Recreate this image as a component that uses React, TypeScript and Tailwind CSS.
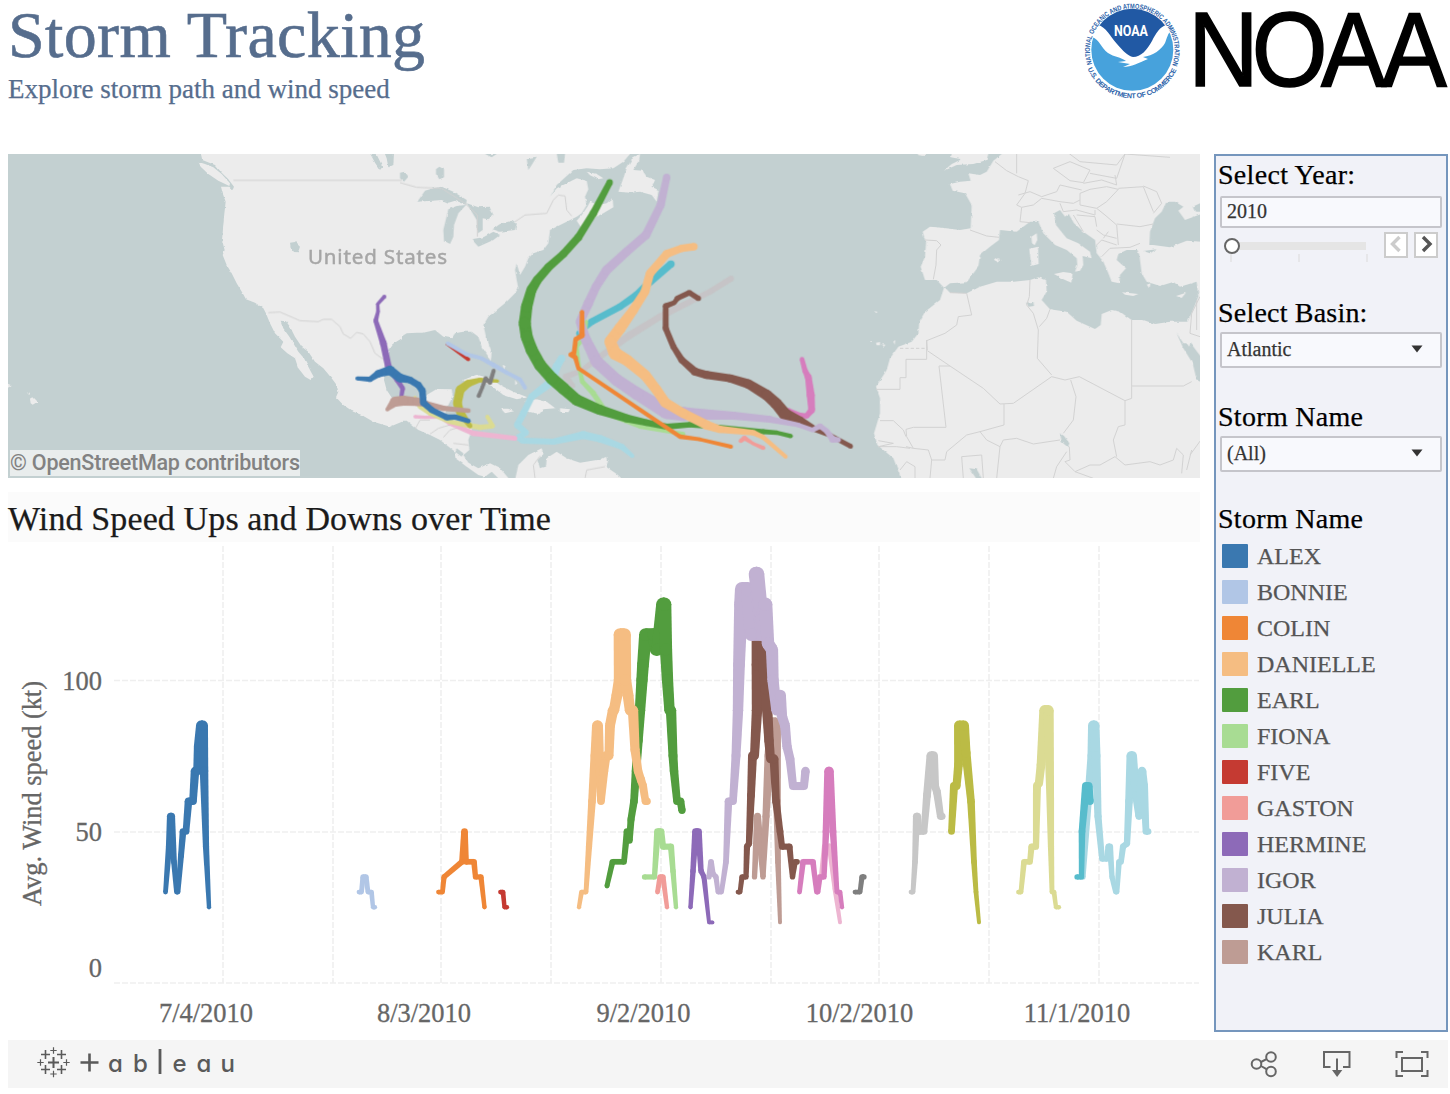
import React from "react";

type Pt = [number, number, number];

function Taper({ pts, color }: { pts: Pt[]; color: string }) {
  return (
    <g fill={color}>
      {pts.map(([x, y, w], i) => {
        const next = pts[i + 1];
        let poly = null;
        if (next) {
          const [x2, y2, w2] = next;
          const len = Math.hypot(x2 - x, y2 - y) || 1;
          const nx = -(y2 - y) / len / 2;
          const ny = (x2 - x) / len / 2;
          poly = (
            <polygon
              points={`${x + nx * w},${y + ny * w} ${x2 + nx * w2},${y2 + ny * w2} ${x2 - nx * w2},${y2 - ny * w2} ${x - nx * w},${y - ny * w}`}
            />
          );
        }
        return (
          <React.Fragment key={i}>
            {poly}
            <circle cx={x} cy={y} r={w / 2} />
          </React.Fragment>
        );
      })}
    </g>
  );
}

const C = {
  alex: "#3a78b0",
  bonnie: "#b1c6e6",
  colin: "#ef8636",
  danielle: "#f5bd82",
  earl: "#529d3e",
  fiona: "#a8dc93",
  five: "#c53a32",
  gaston: "#f19c98",
  hermine: "#8d6ab8",
  igor: "#c1b1d2",
  julia: "#84584d",
  karl: "#be9c94",
  lisa: "#d67dbd",
  matthew: "#edb5d1",
  nicole: "#7f7f7f",
  otto: "#c7c7c7",
  paula: "#bbbb45",
  richard: "#dbdb93",
  shary: "#57bccc",
  tomas: "#a9d8e3",
};

/* Storm paths: x, y, stroke width */
const tracks: [string, Pt[]][] = [
  [C.tomas, [[485, 625, 22], [470, 650, 24], [455, 695, 26], [395, 740, 20], [370, 790, 20], [352, 825, 20], [378, 848, 18], [355, 862, 18], [368, 872, 18], [460, 875, 18], [550, 855, 24], [600, 866, 22], [665, 890, 18], [697, 918, 12]]],
  [C.matthew, [[45, 800, 10], [75, 802, 10], [120, 800, 12], [150, 820, 14], [220, 850, 16], [345, 865, 14]]],
  [C.richard, [[45, 742, 10], [60, 770, 14], [90, 790, 14], [150, 815, 14], [200, 825, 16], [240, 832, 16], [278, 828, 14], [262, 800, 12]]],
  [C.paula, [[292, 693, 10], [240, 690, 14], [205, 700, 22], [180, 720, 27], [172, 760, 26], [180, 785, 24], [210, 828, 14]]],
  [C.hermine, [[-47, 440, 12], [-67, 462, 10], [-66, 485, 11], [-73, 512, 14], [-50, 580, 20], [-35, 650, 20], [-8, 690, 16], [8, 715, 14], [4, 740, 12]]],
  [C.karl, [[-38, 778, 12], [-15, 755, 30], [10, 752, 30], [50, 755, 26], [80, 762, 18], [130, 775, 16], [205, 782, 14]]],
  [C.alex, [[-128, 685, 12], [-90, 688, 16], [-65, 671, 22], [-30, 661, 28], [0, 684, 26], [30, 690, 20], [55, 705, 20], [67, 722, 20], [70, 758, 20], [95, 780, 18], [140, 802, 18], [165, 801, 16], [205, 813, 14]]],
  [C.shary, [[813, 342, 22], [740, 405, 22], [710, 435, 22], [660, 470, 20], [575, 515, 20], [535, 550, 14], [580, 602, 12]]],
  [C.fiona, [[558, 515, 12], [555, 560, 12], [530, 590, 12], [537, 650, 12], [547, 695, 14], [580, 730, 16], [620, 790, 16], [720, 830, 12], [850, 852, 12]]],
  [C.earl, [[629, 97, 19], [580, 190, 22], [535, 262, 23], [490, 312, 23], [445, 352, 25], [412, 390, 27], [394, 420, 30], [380, 470, 34], [374, 520, 36], [380, 560, 36], [395, 600, 36], [420, 645, 36], [455, 685, 36], [490, 715, 36], [530, 750, 34], [600, 780, 30], [680, 805, 24], [740, 818, 20], [800, 830, 18], [870, 824, 16], [940, 830, 15], [1090, 845, 15], [1130, 848, 13], [1172, 858, 13]]],
  [C.lisa, [[1206, 628, 14], [1215, 662, 16], [1225, 682, 20], [1232, 735, 24], [1235, 780, 20], [1220, 798, 16], [1200, 795, 14], [1165, 782, 16]]],
  [C.julia, [[895, 445, 16], [868, 428, 16], [832, 445, 16], [823, 458, 14], [797, 468, 17], [797, 535, 18], [820, 590, 18], [845, 630, 20], [885, 665, 24], [920, 675, 24], [990, 685, 24], [1045, 702, 28], [1100, 735, 32], [1128, 760, 34], [1155, 793, 36], [1200, 810, 22], [1240, 835, 18], [1290, 856, 14], [1352, 889, 14]]],
  [C.igor, [[800, 82, 22], [782, 165, 24], [738, 255, 26], [680, 305, 26], [620, 360, 28], [588, 410, 26], [565, 460, 28], [540, 515, 26], [558, 570, 30], [590, 635, 36], [650, 690, 36], [710, 730, 38], [800, 785, 44], [850, 792, 42], [890, 792, 34], [1000, 797, 24], [1110, 808, 20], [1195, 825, 14], [1238, 840, 14], [1260, 828, 16], [1280, 843, 16], [1298, 868, 20], [1315, 870, 15]]],
  [C.danielle, [[882, 290, 22], [845, 295, 22], [800, 312, 24], [750, 370, 25], [735, 425, 26], [700, 480, 28], [660, 535, 34], [630, 575, 34], [645, 610, 38], [680, 630, 34], [735, 675, 32], [770, 720, 30], [795, 757, 30], [850, 790, 28], [920, 825, 28], [960, 838, 22], [1060, 848, 16], [1090, 862, 14], [1157, 920, 12]]],
  [C.colin, [[546, 486, 13], [546, 556, 16], [527, 568, 14], [522, 610, 14], [512, 614, 14], [526, 622, 14], [535, 655, 12], [840, 860, 13], [900, 868, 11], [993, 890, 12]]],
  [C.gaston, [[1022, 873, 12], [1033, 864, 14], [1058, 880, 10], [1090, 894, 12]]],
  [C.five, [[140, 583, 6], [205, 628, 11]]],
  [C.bonnie, [[143, 580, 12], [200, 613, 12], [245, 625, 12], [280, 645, 14], [320, 668, 12], [360, 688, 12], [375, 713, 12]]],
  [C.nicole, [[281, 662, 12], [270, 698, 13], [257, 685, 13], [247, 712, 11], [236, 738, 12]]],
];

const ottoTrack: Pt[] = [[993, 386, 18], [930, 425, 17], [780, 500, 20], [690, 555, 22], [600, 620, 18], [545, 662, 16], [497, 680, 18], [520, 708, 12]];

/* Wind speed series: x, knots */
const series: [string, [number, number][]][] = [
  [C.alex, [[165.5, 30], [169, 45], [170.5, 55], [171.5, 55], [174, 40], [176.5, 30], [178, 30], [181, 42], [183, 50], [186, 50], [188.5, 60], [193, 60], [195, 70], [197.5, 70], [198.5, 78], [201, 85], [203, 85], [204, 70], [206, 45], [209, 25]]],
  [C.bonnie, [[359, 30], [361.5, 30], [363, 35], [366, 35], [368, 30], [371.5, 30], [373, 25], [375, 25]]],
  [C.colin, [[438.5, 30], [442.5, 30], [444, 35], [462, 40], [464.5, 50], [466, 40], [474, 40], [475.5, 35], [481, 35], [484.5, 25]]],
  [C.five, [[500.5, 30], [503, 30], [504.5, 25], [507, 25]]],
  [C.earl, [[607, 32], [612.5, 40], [624, 40], [627, 50], [629.5, 47], [631, 54], [634, 60], [636, 70], [638, 80], [640, 90], [642, 100], [643, 105], [645.5, 115], [654, 115], [656, 110], [657.5, 110], [663, 125], [664.5, 125], [666, 110], [667.5, 100], [669.5, 90], [671, 90], [673, 75], [674, 70], [677, 60], [680.5, 60], [682, 57]]],
  [C.danielle, [[579, 25], [581.5, 30], [586, 30], [589, 45], [592, 60], [595, 75], [597, 85], [598, 85], [600, 70], [601, 60], [604, 70], [606, 75], [609, 75], [610, 85], [613, 90], [614, 90], [617, 95], [619.5, 100], [620, 115], [624.5, 115], [625.5, 100], [628, 95], [630, 90], [633, 90], [635, 77], [638, 70], [641, 67], [643, 65], [645.5, 60], [647, 60]]],
  [C.fiona, [[644.5, 35], [654.5, 35], [657.5, 50], [661, 50], [663, 45], [671, 45], [673, 37], [676, 25]]],
  [C.gaston, [[657.5, 30], [660, 35], [663, 35], [667, 25]]],
  [C.hermine, [[690.5, 25], [693, 37], [695.5, 50], [698.5, 50], [701, 37], [704, 35], [709, 20], [712.5, 20]]],
  [C.karl, [[754.5, 35], [757.5, 55], [759, 50], [763, 35], [766, 55], [769, 75], [772, 86], [776, 86], [777, 60], [778, 40], [780, 20]]],
  [C.julia, [[738, 30], [740, 30], [742, 35], [746, 35], [747, 45], [749, 46], [751, 62], [752.5, 75], [754.5, 75], [757, 90], [757.5, 105], [758, 115], [762, 115], [766, 97], [769, 80], [770.5, 74], [774, 74], [776, 60], [780, 50], [782, 45], [789.5, 45], [792.5, 35], [795, 40], [797, 40]]],
  [C.igor, [[709, 35], [711, 40], [713, 36], [716, 35], [718, 30], [721.5, 30], [726, 40], [728.5, 60], [733, 60], [736, 75], [738, 90], [739, 105], [741, 125], [742, 130], [748, 130], [751, 115], [762, 115], [756, 135], [757, 135], [762, 120], [765.5, 125], [768, 112], [772, 110], [773, 100], [776.5, 90], [780.5, 95], [782, 88], [785, 85], [787, 78], [790, 74], [793, 65], [804, 65], [805.5, 70]]],
  [C.matthew, [[819, 35], [821.5, 35], [825, 45], [830, 45], [835, 31], [840, 20]]],
  [C.lisa, [[799.5, 30], [803, 40], [813, 40], [816.5, 30], [818, 30], [820, 35], [824, 35], [826, 50], [828.5, 70], [829.5, 70], [833, 50], [837, 30], [840, 30], [842, 25]]],
  [C.nicole, [[855, 30], [860, 30], [862, 35], [864, 35]]],
  [C.otto, [[911, 30], [913, 30], [915, 40], [916.5, 55], [917.5, 55], [919, 50], [924, 50], [927, 62], [931, 75], [933.5, 75], [935, 65], [937, 63], [940.5, 55], [942, 55]]],
  [C.paula, [[951.5, 50], [954, 65], [956.5, 65], [958.5, 72], [959, 85], [964, 85], [966, 76], [971, 60], [974, 40], [976, 30], [979, 20]]],
  [C.richard, [[1018.5, 30], [1021, 30], [1024, 40], [1030, 40], [1031.5, 45], [1036, 45], [1037, 65], [1039, 66], [1041, 72], [1044.5, 90], [1048.5, 90], [1050, 65], [1051, 45], [1052, 30], [1054, 30], [1056, 25], [1059, 25]]],
  [C.tomas, [[1083, 35], [1088, 60], [1092, 75], [1093, 85], [1094.5, 85], [1096, 75], [1098, 55], [1102, 41], [1107, 41], [1108.5, 45], [1110, 45], [1112, 35], [1115.5, 30], [1117, 30], [1119, 40], [1121, 40], [1123, 45], [1127, 46], [1129, 60], [1131, 75], [1132.5, 75], [1136, 62], [1139, 55], [1142, 70], [1144, 65], [1146, 50], [1148, 50]]],
  [C.shary, [[1077, 35], [1081.5, 35], [1082, 50], [1086, 65], [1088.5, 65], [1090, 60]]],
];

const toY = (kt: number) => 983 - kt * 3.03;
const toW = (kt: number) => 2 + kt * 0.093;

const legend: [string, string][] = [
  ["ALEX", C.alex],
  ["BONNIE", C.bonnie],
  ["COLIN", C.colin],
  ["DANIELLE", C.danielle],
  ["EARL", C.earl],
  ["FIONA", C.fiona],
  ["FIVE", C.five],
  ["GASTON", C.gaston],
  ["HERMINE", C.hermine],
  ["IGOR", C.igor],
  ["JULIA", C.julia],
  ["KARL", C.karl],
];

function StormMap() {
  return (
    <svg viewBox="8 154 1192 324" width="1192" height="324" className="block">
      <defs>
        {/* Rough coastline edges */}
        <filter id="coast" x="0" y="0" width="100%" height="100%">
          <feTurbulence type="fractalNoise" baseFrequency="0.2" numOctaves="2" seed="4" result="n" />
          <feDisplacementMap in="SourceGraphic" in2="n" scale="2.5" xChannelSelector="R" yChannelSelector="G" />
        </filter>
      </defs>
      <rect x="8" y="154" width="1192" height="324" fill="#c3d0d1" />
      <g filter="url(#coast)">
        {/* Western North America and Mexico */}
        <g transform="translate(0 150) scale(.33333)">
          <g fill="#ececec">
            <path d="M600 0L607 30L645 45L665 68L685 88L702 110L698 120L688 110L663 110L668 130L677 155L672 200L668 250L666 270L674 300L668 315L680 345L695 370L710 400L728 430L738 448L765 458L790 475L797 488L810 520L825 550L850 575L842 592L862 610L885 625L895 655L915 680L932 690L941 680L930 660L912 625L895 605L880 580L868 560L850 535L842 512L858 514L870 530L885 560L905 590L925 605L945 635L970 655L995 685L1010 705L1015 725L1008 742L1030 765L1060 785L1085 795L1120 815L1170 830L1206 815L1206 748L1180 750L1160 720L1152 690L1155 665L1166 630L1165 600L1178 582L1206 565L1206 0Z" />
            <path d="M596 36L615 42L640 52L665 72L690 100L688 108L655 92L625 72L602 50Z" />
            <path d="M90 748L100 742L113 755L98 764L92 760Z" />
            <path d="M80 728L90 728L88 735Z M20 700L32 705L24 710Z" />
          </g>
          <g fill="#c3d0d1">
            <path d="M870 278L885 276L900 290L894 307L882 306L872 292Z" />
            <path d="M1105 0L1130 14L1148 50L1140 60L1125 38Z M1150 0L1182 10L1180 45L1165 52L1160 25Z" />
          </g>
        </g>
        {/* Eastern North America, Caribbean and South America */}
        <g transform="translate(400 150) scale(.33333)">
          <g fill="#ececec">
            <path d="M-4 565L20 550L50 548L70 548L105 540L130 560L155 565L165 550L190 545L215 545L235 560L245 590L262 615L272 635L275 605L258 560L250 525L265 500L290 480L320 455L345 430L355 415L350 390L345 360L350 340L360 375L375 350L385 325L400 310L430 300L445 280L450 240L470 230L500 215L530 200L545 190L560 165L555 140L565 118L560 92L530 85L500 100L470 115L450 140L470 105L500 78L520 60L560 55L600 58L640 55L670 35L700 0L-4 0Z" />
            <path d="M530 212L545 235L562 228L580 205L610 190L640 172L638 145L620 160L595 165L570 155L562 170L545 195Z" />
            <path d="M720 12L700 22L680 55L668 90L655 125L690 128L720 125L755 135L770 155L775 120L755 110L765 90L740 80L728 62L700 60L718 30Z" />
            <path d="M560 65L590 72L610 85L595 88L570 76Z" />
            <path d="M-4 748L25 760L65 765L80 735L110 717L155 718L158 740L145 765L135 790L125 805L170 800L210 815L215 840L205 870L208 900L190 915L205 938L235 955L270 940L300 955L325 984L300 990L275 965L255 980L235 975L200 950L170 928L165 905L120 870L90 855L55 840L20 812L-4 812Z" />
            <path d="M345 990L355 945L385 915L425 895L430 912L412 930L420 955L438 950L440 925L470 905L500 925L540 938L590 930L625 930L618 950L650 972L670 990Z" />
            <path d="M190 690L230 674L270 685L300 705L340 725L382 742L350 748L310 735L280 712L240 692L200 700Z" />
            <path d="M370 782L380 765L378 752L410 748L440 755L466 775L430 778L418 792Z M303 776L325 776L342 784L315 790Z M480 775L510 778L505 787L480 785Z" />
            <path d="M308 645L316 648L312 660Z M345 690L352 700L346 706Z M600 930L618 920L622 935Z" />
          </g>
          <g fill="#c3d0d1">
            <path d="M52 155L75 122L100 115L125 110L160 125L200 150L198 165L165 152L145 158L125 150L95 152Z" />
            <path d="M108 58L118 50L132 58L132 82L118 88L108 72Z M0 68L15 65L25 80L12 95L0 85Z" />
            <path d="M145 178L170 168L198 165L175 190L162 225L160 260L150 282L132 272L130 240Z" />
            <path d="M200 160L235 172L268 170L280 195L265 208L248 205L248 240L234 250L230 210L215 185Z" />
            <path d="M215 268L250 262L280 245L300 255L280 270L235 290Z M278 238L300 222L335 212L350 222L345 240L300 245Z" />
            <path d="M380 25L410 20L395 45L385 60Z M470 10L495 12L492 38L475 38Z M255 12L290 12L275 22Z M170 895L190 910L185 920L165 905Z" />
          </g>
        </g>
        {/* Europe and Africa */}
        <g transform="translate(800 150) scale(.33333)">
          <path
            fill="#ececec"
            d="M620 0L580 32L560 65L540 75L505 70L512 92L480 95L450 102L458 122L495 130L515 165L512 235L480 240L410 232L390 230L368 245L378 280L375 320L362 350L375 390L410 390L432 413L420 450L375 485L358 515L355 550L335 575L295 590L270 625L260 660L228 710L240 745L240 790L222 850L232 885L280 925L305 990L1210 990L1210 0Z"
          />
          <path fill="#ececec" d="M432 62L455 42L485 28L452 22L460 0L568 0L560 30L520 42L470 45Z M348 0L388 0L375 18L355 16Z" />
          <path
            fill="#c3d0d1"
            d="M433 413L450 400L500 397L535 350L540 315L570 290L597 270L600 240L650 245L690 215L715 215L730 250L765 285L800 300L830 325L832 345L825 365L840 362L850 345L848 318L875 325L870 305L835 280L800 265L768 225L762 190L780 180L795 200L806 192L822 220L850 245L885 270L890 310L910 335L925 370L935 395L958 400L960 375L978 355L950 330L955 312L980 300L1012 300L1018 315L1025 370L1040 395L1080 408L1120 396L1140 410L1190 395L1195 440L1175 490L1162 515L1110 515L1065 522L1030 510L995 510L960 485L935 480L905 492L902 525L885 537L830 512L800 485L750 478L725 450L740 425L738 390L715 382L690 390L640 395L590 395L540 410L500 430L450 428L437 415Z"
          />
          <path fill="#c3d0d1" d="M1048 285L1050 245L1065 205L1085 185L1100 155L1125 155L1150 170L1135 182L1155 210L1210 190L1210 275L1160 272L1110 292L1060 285Z M1030 303L1070 298L1050 310Z M1178 170L1210 155L1210 185L1185 185Z" />
          <path fill="#c3d0d1" d="M1130 550L1150 580L1172 580L1210 630L1210 700L1190 690L1178 640L1150 595Z M678 458L700 456L702 468L685 470Z M780 850L792 858L808 880L804 892L785 876Z M508 955L530 958L545 985L528 985Z" />
          <path fill="#ececec" d="M1138 545L1152 570L1168 590L1172 575L1176 540Z" />
          <g fill="#ececec">
            <path d="M762 372L790 366L818 370L814 398L790 388Z M688 296L714 290L716 342L694 348Z M694 260L710 250L712 270L704 286L696 280Z M582 328L595 320L600 332L590 338Z M966 427L1015 432L1000 438L975 434Z M1128 438L1158 428L1145 444Z M1040 404L1052 400L1048 415Z" />
            <path d="M228 578L240 576L240 586L230 586Z M246 583L256 584L252 591Z M222 484L232 485L230 490Z M208 570L216 572L210 576Z M280 575L286 570L284 584Z" />
          </g>
        </g>
      </g>
      {/* Country borders */}
      <g fill="none" stroke="#d2d2d2" strokeWidth="3">
        <path transform="translate(0 150) scale(.33333)" d="M700 91H1206M805 488L840 486L900 512L955 515L970 508L995 508L1020 530L1030 552L1052 565L1070 547L1090 552L1110 575L1125 610L1150 628" />
        <path transform="translate(400 150) scale(.33333)" d="M0 98L50 112L125 115L195 160L232 195V260M345 215L375 195L440 190L460 150L475 135L495 138L500 180L515 198M45 838L60 810H90M90 852L115 835L165 820M130 862L150 840L200 825M160 880L205 885M405 985L400 945L420 918M555 985L560 960L615 950" />
        <g transform="translate(800 150) scale(.33333)">
          <path d="M375 270L410 272L423 285L410 300L408 345L400 388M510 240L560 258L597 262M585 35L620 62L655 80L685 92L675 130L650 165L665 172L660 215L690 218M650 0V70M655 135L690 125L725 140L770 125L780 105L845 120M665 172L700 165L725 145L780 155L820 160L840 150M760 55L810 35L870 60L850 98L810 92L760 55M800 5L840 35L950 45L975 12M870 70L950 85L975 12M850 100L905 90L950 105L945 75M840 130L870 118L920 110L955 118L920 155L890 175L840 165L840 130M955 115L1030 110L1060 185M1030 108L1070 125L1085 160L1060 190M780 160L790 185L830 180L885 195L885 180M820 195L850 245M830 195L885 200L890 230M890 175L915 195L950 225L955 285M950 222L1020 230L1060 222M890 240L910 255L950 265M890 285L905 270L950 285M905 320L930 295L990 292L1020 280M975 12L1110 22M910 265L925 245" />
          <path d="M450 428L500 430L515 495L475 500L470 525L435 550L380 572L382 600" />
          <path d="M300 595H378" strokeDasharray="10 6" />
          <path d="M380 570V628H318V683H300V718H228M382 602L450 648L550 715L600 762L640 760L755 680L795 690L838 680L975 752M450 648H417L438 832H340L318 838L320 860L340 895M690 390L688 440L680 465L700 490L715 540L712 625L755 675M750 478L740 505L718 530M995 510V745L975 752V825L955 830L940 870L950 920M995 708H1150L1175 695M812 690L828 740L820 810L790 850M612 762V825L540 845L500 855L440 905L435 930L395 930L385 900L340 895L318 890M540 845L560 870L600 890L610 870L650 865L700 882L780 870M600 890L590 985M545 915L550 985M490 985L485 920L545 915M395 930L390 985M240 812H280L310 840L318 860M235 872L280 880L235 890H290L330 895M300 960L320 935L345 950V985M808 890L810 930L795 935L825 965L880 985M825 965L870 945L900 945L945 920L975 945L1050 935L1080 945L1120 930L1130 895L1150 915L1145 970M760 985L770 950L800 905M1170 915L1210 860M1200 440L1175 490L1170 550L1200 560M1190 450V540M1160 960L1175 900" />
        </g>
      </g>
      <text x="308" y="264" textLength="139" fontFamily="'Noto Sans','Open Sans',sans-serif" fontSize="20.500" fill="#a6a6a6" stroke="#a6a6a6" strokeWidth=".5">
        United States
      </text>
      <g transform="translate(400 150) scale(.33333)">
        <g opacity=".75">
          <Taper pts={ottoTrack} color="#c7c1c3" />
        </g>
        {tracks.map(([color, pts], i) => (
          <Taper key={i} pts={pts} color={color} />
        ))}
      </g>
      <rect x="10" y="450" width="290" height="26" fill="#e9eded" />
      <text x="10" y="470" textLength="290" fontFamily="Roboto, sans-serif" fontSize="21.500" fontWeight="500" fill="#828282">
        © OpenStreetMap contributors
      </text>
    </svg>
  );
}

function WindChart() {
  const serif = "'Liberation Serif', serif";
  return (
    <svg viewBox="8 542 1192 490" width="1192" height="490" className="block">
      <g stroke="#efefef" strokeWidth="1.6" strokeDasharray="6 2" fill="none">
        {[223, 333, 441, 551, 661, 771, 879, 989, 1099].map((x) => (
          <path key={x} d={`M${x} 546V983`} />
        ))}
        {[680.5, 832, 983].map((y) => (
          <path key={y} d={`M114 ${y}H1199`} />
        ))}
      </g>
      {series.map(([color, pts], i) => (
        <Taper key={i} color={color} pts={pts.map(([x, k]): Pt => [x, toY(k), toW(k)])} />
      ))}
      <g fontFamily={serif} fontSize="26.5" fill="#666" stroke="#666" strokeWidth=".3">
        <g textAnchor="end">
          <text x="102" y="690">100</text>
          <text x="102" y="841">50</text>
          <text x="102" y="977">0</text>
        </g>
        <g textAnchor="middle">
          <text x="206" y="1022">7/4/2010</text>
          <text x="424" y="1022">8/3/2010</text>
          <text x="643.5" y="1022">9/2/2010</text>
          <text x="859.5" y="1022">10/2/2010</text>
          <text x="1077" y="1022">11/1/2010</text>
        </g>
        <text transform="translate(40.500 906) rotate(-90)" textLength="225">
          Avg. Wind speed (kt)
        </text>
      </g>
    </svg>
  );
}

function NoaaLogo() {
  return (
    <svg viewBox="1080 0 370 104" width="370" height="104" className="block shrink-0 overflow-visible">
      <defs>
        <path id="ringTop" d="M1092 64A42.400 42.400 0 1 1 1172.600 64" />
        <path id="ringBottom" d="M1086.500 66A48.600 48.600 0 0 0 1178 66" />
        <clipPath id="seal">
          <circle cx="1132.300" cy="49.800" r="41" />
        </clipPath>
      </defs>
      <g clipPath="url(#seal)">
        <rect x="1088" y="5" width="90" height="90" fill="#fff" />
        <path d="M1098 25C1106 27 1110 36 1117 44C1123 51 1128 56 1133 57C1141 57 1147 50 1152 41C1156 33 1160 27 1166 25L1160 0H1104Z" fill="#2159a4" />
        <path d="M1086 37H1092C1100 40 1101 48 1108 53C1114 57 1121 57 1126 61L1118 62L1130 64L1123 67C1132 67 1138 63 1148 59L1143 57C1153 56 1162 49 1165 43C1167 38 1168 33 1171 31L1182 34V100H1086Z" fill="#47a2dc" />
      </g>
      <text x="1114" y="35.500" textLength="34" lengthAdjust="spacingAndGlyphs" fontFamily="Roboto, sans-serif" fontSize="15.500" fontWeight="700" fill="#fff">
        NOAA
      </text>
      <g fontFamily="'Liberation Sans', sans-serif" fontWeight="700" fontSize="7" fill="#2b62a9">
        <text>
          <textPath href="#ringTop" textLength="161" lengthAdjust="spacingAndGlyphs">
            NATIONAL OCEANIC AND ATMOSPHERIC ADMINISTRATION
          </textPath>
        </text>
        <text>
          <textPath href="#ringBottom" textLength="112" startOffset="3">
            U.S. DEPARTMENT OF COMMERCE
          </textPath>
        </text>
      </g>
      <text
        transform="scale(.92 1)"
        x="1291.500 1360.500 1436 1502"
        y="86"
        fontFamily="'Liberation Sans', sans-serif"
        fontSize="106"
        fill="#000"
        stroke="#000"
        strokeWidth="1.600"
      >
        NOAA
      </text>
    </svg>
  );
}

function Select({ value }: { value: string }) {
  return (
    <div className="ml-[4px] flex h-9 w-[222px] items-center justify-between rounded-[2px] border-2 border-[#c5c5cb] bg-[#f8f9fd] pl-[5px] pr-[17px] text-[20px] leading-none text-[#333]">
      <span className="-mt-[3px]">{value}</span>
      <svg width="12" height="8" viewBox="0 0 12 8" className="-mt-[3px]">
        <path d="M0.500 0.500H11.500L6 7.500Z" fill="#333" />
      </svg>
    </div>
  );
}

function Sidebar() {
  return (
    <aside className="h-[878px] w-[234px] border-2 border-[#7596bd] bg-[#f1f2f8] text-black">
      <div className="h-[40px] pl-[2px] pt-[3px] text-[28px] leading-8 tracking-[0.3px]">Select Year:</div>
      <div className="ml-[4px] flex h-8 w-[222px] items-center rounded-[2px] border-2 border-[#c5c5cb] bg-[#f8f9fd] pb-[2px] pl-[5px] text-[20px] leading-none text-[#333]">2010</div>
      <div className="ml-[6px] mt-[4px] flex h-[30px]">
        <svg width="156" height="30" viewBox="0 0 156 30">
          <rect x="10" y="10" width="134" height="8" fill="#e5e5e5" />
          <path d="M9 22V30M77 22V30M145 22V30" stroke="#e2e2e4" strokeWidth="1.500" />
          <circle cx="10" cy="14" r="7" fill="#fff" stroke="#666" strokeWidth="2" />
        </svg>
        <div className="ml-[6px] flex gap-[6px]">
          <svg width="24" height="26" viewBox="0 0 24 26">
            <rect x="1" y="1" width="22" height="24" fill="#fff" stroke="#ccc" strokeWidth="2" />
            <path d="M15.500 5L8.500 12L15.500 19" fill="none" stroke="#ccc" strokeWidth="3.400" />
          </svg>
          <svg width="24" height="26" viewBox="0 0 24 26">
            <rect x="1" y="1" width="22" height="24" fill="#fff" stroke="#ccc" strokeWidth="2" />
            <path d="M9 5L16 12L9 19" fill="none" stroke="#555" strokeWidth="3.400" />
          </svg>
        </div>
      </div>
      <div className="mt-[35px] h-[35px] pl-[2px] text-[28px] leading-8 tracking-[0.2px]">Select Basin:</div>
      <Select value="Atlantic" />
      <div className="mt-[33px] h-[35px] pl-[2px] text-[28px] leading-8 tracking-[0.3px]">Storm Name</div>
      <Select value="(All)" />
      <div className="mt-[31px] h-[35px] pl-[2px] text-[28px] leading-8 tracking-[0.3px]">Storm Name</div>
      <ul>
        {legend.map(([name, color]) => (
          <li key={name} className="flex h-9 items-center gap-[9px] pl-[6px] text-[24px] leading-none text-[#555]">
            <span className="h-6 w-[26px] rounded-[1px]" style={{ backgroundColor: color }} />
            <span>{name}</span>
          </li>
        ))}
      </ul>
    </aside>
  );
}

const plus = (x: number, y: number, r: number) => `M${x - r} ${y}H${x + r}M${x} ${y - r}V${y + r}`;

function Footer() {
  return (
    <footer className="mt-2 flex h-12 items-center justify-between bg-[#f5f5f5]">
      <svg width="240" height="48" viewBox="8 1040 240 48" fill="none" stroke="#5a5a5a">
        <path d={plus(53.5, 1062.5, 5.5)} strokeWidth="2" />
        <path d={plus(45.5, 1054.5, 4.500) + plus(61.5, 1054.5, 4.500) + plus(45.5, 1069.5, 4.500) + plus(61.5, 1069.5, 4.500)} strokeWidth="1.600" />
        <path d={plus(53.5, 1050.5, 3.200) + plus(53.5, 1074, 3.200) + plus(40.5, 1062.5, 3.200) + plus(66.5, 1062.5, 3.200)} strokeWidth="1.200" />
        <path d={plus(89.500, 1062.5, 9)} strokeWidth="2.600" />
        <path d="M160 1049V1074" strokeWidth="2.800" />
        <text y="1071.500" x="108 133 172.500 196.500 220.500" className="[font-feature-settings:'cv11']" fontFamily="Inter, sans-serif" fontSize="24" fontWeight="500" fill="#5a5a5a" stroke="none">
          abeau
        </text>
      </svg>
      <svg width="200" height="48" viewBox="1248 1040 200 48" fill="none" stroke="#666" strokeWidth="2">
        <circle cx="1256.500" cy="1064" r="4.800" />
        <circle cx="1271" cy="1057" r="4.800" />
        <circle cx="1271" cy="1071.500" r="4.800" />
        <path d="M1261 1062L1266.500 1059.200M1261 1066L1266.500 1069.200" />
        <path d="M1330.500 1067H1324V1052H1349.500V1067H1343M1337 1058.500V1070" />
        <path d="M1332 1070H1342.300L1337.100 1077Z" fill="#666" stroke="none" />
        <rect x="1402" y="1058" width="20" height="13" />
        <path d="M1403 1052H1396.500V1058M1421 1052H1427.500V1058M1396.500 1070V1076H1403M1427.500 1070V1076H1421" />
      </svg>
    </footer>
  );
}

export default function App() {
  return (
    <div className="h-[1094px] w-[1450px] overflow-hidden bg-white pl-2 font-['Liberation_Serif',serif] [-webkit-text-stroke-width:0.25px]">
      <header className="flex h-[154px] justify-between text-[#566d8d]">
        <div>
          <h1 className="h-[72px] text-[66px] leading-[70px] tracking-[0.35px] [-webkit-text-stroke-width:0.6px]">Storm Tracking</h1>
          <p className="text-[27px] leading-[34px]">Explore storm path and wind speed</p>
        </div>
        <NoaaLogo />
      </header>
      <div className="w-[1440px]">
        <div className="flex gap-[14px]">
          <main className="w-[1192px]">
            <StormMap />
            <h2 className="mt-[14px] h-[50px] bg-[#fbfbfb] text-[34px] leading-[54px] tracking-[0.12px] text-[#1b1b1b]">Wind Speed Ups and Downs over Time</h2>
            <WindChart />
          </main>
          <Sidebar />
        </div>
        <Footer />
      </div>
    </div>
  );
}
